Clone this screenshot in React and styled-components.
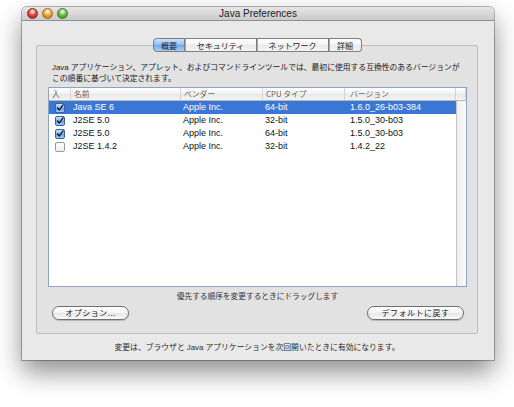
import React from "react";
import styled, { createGlobalStyle } from "styled-components";

const GlobalStyle = createGlobalStyle`
  body {
    margin: 0;
    background: #ffffff;
    font-family: "Liberation Sans", "Noto Sans CJK JP", sans-serif;
  }
`;

const jp = `"Noto Sans CJK JP", "Liberation Sans", sans-serif`;
const latin = `"Liberation Sans", "Noto Sans CJK JP", sans-serif`;

const Page = styled.div`
  width: 514px;
  height: 407px;
  padding: 7px 0 0 22px;
  box-sizing: border-box;
  overflow: hidden;
`;

const Window = styled.div`
  width: 472px;
  height: 353px;
  background: #e9e9e9;
  border-radius: 5px 5px 0 0;
  box-shadow: 0 0 0 1px rgba(0, 0, 0, 0.28), 0 12px 26px rgba(0, 0, 0, 0.45);
  display: flex;
  flex-direction: column;
`;

const TitleBar = styled.div`
  height: 13px;
  border-bottom: 1px solid #8f8f8f;
  border-radius: 5px 5px 0 0;
  background: linear-gradient(#e6e6e6, #cacaca);
  display: grid;
  grid-template-columns: 1fr auto 1fr;
  align-items: center;
  padding: 0 5px;
`;

const Lights = styled.div`
  display: flex;
  gap: 4px;
`;

const Light = styled.span`
  width: 11px;
  height: 11px;
  border-radius: 50%;
  box-sizing: border-box;
  border: 1px solid ${(p) => p.$edge};
  background: radial-gradient(circle at 50% 30%, #ffffff 0%, ${(p) => p.$tone} 45%, ${(p) => p.$deep} 100%);
`;

const Title = styled.div`
  font-family: ${latin};
  font-size: 10px;
  color: #222;
  line-height: 13px;
`;

const Content = styled.div`
  flex: 1;
  display: flex;
  flex-direction: column;
  padding: 17px 16px 0 14px;
`;

const Tabs = styled.div`
  display: flex;
  justify-content: center;
  height: 14px;
  position: relative;
  z-index: 1;
  padding-left: 1px;
`;

const Tab = styled.div`
  width: ${(p) => p.$w}px;
  box-sizing: border-box;
  height: 14px;
  display: flex;
  align-items: center;
  justify-content: center;
  font-family: ${jp};
  font-size: 8px;
  color: #1e1e1e;
  border: 1px solid #7d7d7d;
  border-left-width: ${(p) => (p.$first ? 1 : 0)}px;
  border-radius: ${(p) => (p.$first ? "4px 0 0 4px" : p.$last ? "0 4px 4px 0" : "0")};
  background: ${(p) =>
    p.$active
      ? "linear-gradient(#cfe3fb, #8dbcf0 50%, #6fa8ec 51%, #a8cff7)"
      : "linear-gradient(#ffffff, #f3f3f3 50%, #e8e8e8 51%, #f6f6f6)"};
  & + & {
    box-shadow: inset 1px 0 0 #a9a9a9;
  }
`;

const TabBox = styled.div`
  margin-top: -7px;
  height: 289px;
  box-sizing: border-box;
  border: 1px solid #bdbdbd;
  border-radius: 2px;
  background: #e2e2e2;
  padding: 16px 10px 0 11px;
  display: flex;
  flex-direction: column;
`;

const Description = styled.p`
  margin: 0 0 3px;
  padding-left: 4px;
  font-family: ${latin};
  font-size: 7.8px;
  line-height: 11px;
  color: #1a1a1a;
  white-space: nowrap;
`;

const Table = styled.div`
  height: 200px;
  box-sizing: border-box;
  flex-shrink: 0;
  border: 1px solid #8ea3c2;
  background: #ffffff;
  display: flex;
  flex-direction: column;
`;

const cols = "22px 110px 82px 82px 111px 10px";

const HeaderRow = styled.div`
  display: grid;
  grid-template-columns: ${cols};
  height: 12px;
  border-bottom: 1px solid #b9b9b9;
  background: linear-gradient(#ffffff, #f1f1f1 50%, #e8e8e8 51%, #f4f4f4);
`;

const HeaderCell = styled.div`
  font-family: ${jp};
  font-size: 7.8px;
  line-height: 12px;
  color: #666;
  padding-left: ${(p) => p.$pad || 3}px;
  border-right: 1px solid #d2d2d2;
  white-space: nowrap;
  overflow: hidden;
`;

const Body = styled.div`
  flex: 1;
  display: flex;
`;

const Rows = styled.div`
  flex: 1;
`;

const ScrollTrack = styled.div`
  width: 9px;
  border-left: 1px solid #c6c6c6;
  background: linear-gradient(90deg, #eeeeee, #fafafa);
`;

const Row = styled.div`
  display: grid;
  grid-template-columns: 22px 110px 82px 82px 111px;
  height: 13px;
  align-items: center;
  background: ${(p) => (p.$selected ? "#3a76d6" : "transparent")};
  color: ${(p) => (p.$selected ? "#ffffff" : "#111111")};
`;

const Cell = styled.div`
  font-family: ${latin};
  font-size: 9px;
  line-height: 13px;
  padding-left: ${(p) => p.$pad || 2}px;
  white-space: nowrap;
`;

const CheckCell = styled.div`
  display: flex;
  justify-content: center;
`;

const Check = styled.span`
  width: 10px;
  height: 10px;
  box-sizing: border-box;
  border-radius: 2px;
  border: 1px solid ${(p) => (p.$on ? "#35649f" : "#9a9a9a")};
  background: ${(p) =>
    p.$on
      ? "linear-gradient(#cfe4fb, #7fb3ee 50%, #5b9be6 51%, #a4cdf7)"
      : "linear-gradient(#ffffff, #ececec)"};
  display: flex;
  align-items: center;
  justify-content: center;
  overflow: visible;
`;

const Hint = styled.div`
  margin-top: 3px;
  text-align: center;
  font-family: ${jp};
  font-size: 7.7px;
  line-height: 11px;
  color: #333;
`;

const ButtonRow = styled.div`
  margin-top: 5px;
  display: flex;
  justify-content: space-between;
  padding: 0 3px 0 4px;
`;

const PillButton = styled.button`
  width: ${(p) => p.$w}px;
  height: 14px;
  padding: 0;
  border: 1px solid #6f6f6f;
  border-radius: 7px;
  background: linear-gradient(#ffffff, #f4f4f4 50%, #e6e6e6 51%, #fafafa);
  box-shadow: 0 1px 1px rgba(0, 0, 0, 0.2);
  font-family: ${jp};
  font-size: 8px;
  letter-spacing: 0.5px;
  color: #1a1a1a;
  line-height: 12px;
`;

const Footer = styled.div`
  margin-top: 9px;
  text-align: center;
  font-family: ${latin};
  font-size: 7.8px;
  line-height: 10px;
  color: #2a2a2a;
`;

const tabs = [
  { label: "概要", w: 32, active: true },
  { label: "セキュリティ", w: 72 },
  { label: "ネットワーク", w: 72 },
  { label: "詳細", w: 33 },
];

const versions = [
  { on: true, name: "Java SE 6", vendor: "Apple Inc.", cpu: "64-bit", ver: "1.6.0_26-b03-384", selected: true },
  { on: true, name: "J2SE 5.0", vendor: "Apple Inc.", cpu: "32-bit", ver: "1.5.0_30-b03" },
  { on: true, name: "J2SE 5.0", vendor: "Apple Inc.", cpu: "64-bit", ver: "1.5.0_30-b03" },
  { on: false, name: "J2SE 1.4.2", vendor: "Apple Inc.", cpu: "32-bit", ver: "1.4.2_22" },
];

function CheckBox({ on }) {
  return (
    <Check $on={on}>
      {on && (
        <svg width="10" height="10" viewBox="0 0 10 10">
          <path d="M2 5 L4.2 7.5 L8.8 1" fill="none" stroke="#111" strokeWidth="1.6" strokeLinecap="round" strokeLinejoin="round" />
        </svg>
      )}
    </Check>
  );
}

export default function App() {
  return (
    <Page>
      <GlobalStyle />
      <Window>
        <TitleBar>
          <Lights>
            <Light $tone="#e2483f" $deep="#9c1a12" $edge="#8e2a24" />
            <Light $tone="#f0a93a" $deep="#b4690b" $edge="#9c6a20" />
            <Light $tone="#6cc04a" $deep="#2e7d17" $edge="#3f7a2a" />
          </Lights>
          <Title>Java Preferences</Title>
          <span />
        </TitleBar>
        <Content>
          <Tabs>
            {tabs.map((t, i) => (
              <Tab key={t.label} $w={t.w} $active={t.active} $first={i === 0} $last={i === tabs.length - 1}>
                {t.label}
              </Tab>
            ))}
          </Tabs>
          <TabBox>
            <Description>
              Java アプリケーション、アプレット、およびコマンドラインツールでは、最初に使用する互換性のあるバージョンが
              <br />
              この順番に基づいて決定されます。
            </Description>
            <Table>
              <HeaderRow>
                <HeaderCell>入</HeaderCell>
                <HeaderCell>名前</HeaderCell>
                <HeaderCell>ベンダー</HeaderCell>
                <HeaderCell>CPU タイプ</HeaderCell>
                <HeaderCell $pad={5}>バージョン</HeaderCell>
                <HeaderCell />
              </HeaderRow>
              <Body>
                <Rows>
                  {versions.map((v, i) => (
                    <Row key={i} $selected={v.selected}>
                      <CheckCell>
                        <CheckBox on={v.on} />
                      </CheckCell>
                      <Cell>{v.name}</Cell>
                      <Cell>{v.vendor}</Cell>
                      <Cell>{v.cpu}</Cell>
                      <Cell $pad={5}>{v.ver}</Cell>
                    </Row>
                  ))}
                </Rows>
                <ScrollTrack />
              </Body>
            </Table>
            <Hint>優先する順序を変更するときにドラッグします</Hint>
            <ButtonRow>
              <PillButton $w={77}>オプション...</PillButton>
              <PillButton $w={97}>デフォルトに戻す</PillButton>
            </ButtonRow>
          </TabBox>
          <Footer>変更は、ブラウザと Java アプリケーションを次回開いたときに有効になります。</Footer>
        </Content>
      </Window>
    </Page>
  );
}
